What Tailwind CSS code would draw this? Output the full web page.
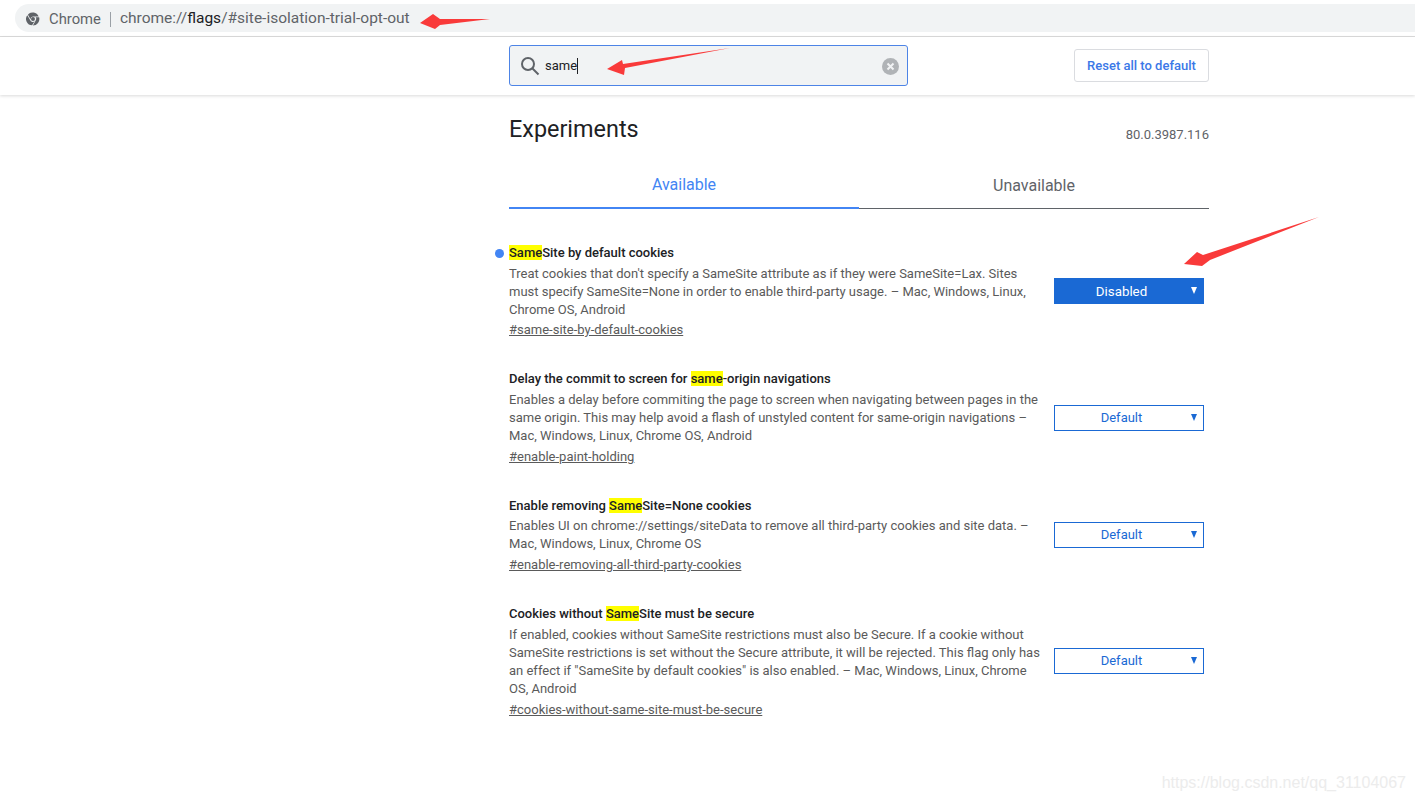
<!DOCTYPE html>
<html lang="en">
<head>
  <meta charset="UTF-8" />
  <title>Experiments</title>
  <script src="https://cdn.jsdelivr.net/npm/@tailwindcss/browser@4"></script>
</head>
<body class="relative h-[801px] overflow-hidden bg-white font-['Roboto',sans-serif] text-[#5a5a5a]">

  <!-- Address bar -->
  <div class="h-[37px] pt-1 pl-[15px] border-b border-[#dcdcdc]">
    <div class="flex items-center h-7 pt-0.5 pl-[11px] rounded-l-[14px] bg-[#f1f3f4] text-[15.5px]">
      <svg class="w-3.5 h-3.5 text-[#5f6368]" viewBox="0 0 24 24" fill="currentColor">
        <path d="M12 7.5h9.7A11 11 0 0 0 3.3 4.6l4.7 8.1A4.5 4.5 0 0 1 12 7.5z"/>
        <path d="M7 13.7 2.2 5.4A11 11 0 0 0 10.5 22.9l4.7-8.1A4.5 4.5 0 0 1 7 13.7z"/>
        <path d="M22.5 9h-6a4.5 4.5 0 0 1 .1 5.4L11.8 23A11 11 0 0 0 22.5 9z"/>
        <circle cx="12" cy="12" r="3.4"/>
      </svg>
      <span class="ml-[9px] text-[14.8px] text-[#5f6368]">Chrome</span>
      <span class="w-px h-[15px] mx-[9px] bg-[#9aa0a6]"></span>
      <span class="text-[#5f6368]">chrome://<span class="text-[#202124]">flags</span>/#site-isolation-trial-opt-out</span>
    </div>
  </div>

  <!-- Search header -->
  <header class="h-[58px] shadow-[0_1px_3px_rgba(0,0,0,0.15)]">
    <div class="flex items-start w-[700px] ml-[509px] pt-2">
      <div class="flex items-center w-[399px] h-[41px] pl-[10px] pr-2 rounded-[3px] border border-[#4d84e6] bg-[#f1f3f4]">
        <svg class="w-5 h-5 text-[#5f6368]" viewBox="0 0 20 20" fill="none" stroke="currentColor" stroke-width="2">
          <circle cx="8" cy="8" r="6"/>
          <path d="m12.5 12.5 6 6"/>
        </svg>
        <span class="ml-[5px] text-[13px] text-[#202124]">same</span>
        <span class="w-px h-4 bg-[#202124]"></span>
        <svg class="w-[17px] h-[17px] mt-px ml-auto" viewBox="0 0 17 17">
          <circle cx="8.5" cy="8.5" r="8.5" fill="#b0b3b6"/>
          <path d="m5.5 5.5 6 6m0-6-6 6" stroke="#f1f3f4" stroke-width="2"/>
        </svg>
      </div>
      <button class="flex items-center justify-center w-[135px] h-[33px] mt-1 ml-auto rounded-[3px] border border-[#dadce0] text-[13px] font-medium text-[#3b78e7]">Reset all to default</button>
    </div>
  </header>

  <main class="w-[700px] ml-[509px]">
    <div class="flex items-end justify-between h-[47px]">
      <h1 class="text-[23.4px] leading-[30px] -mb-0.5 text-[#202124]">Experiments</h1>
      <span class="text-[13px] leading-[18px] -mb-0.5 text-[#5f6368]">80.0.3987.116</span>
    </div>

    <div class="flex mt-[18px] h-[49px] text-[16px]">
      <div class="w-[350px] pt-[13px] text-center border-b-2 border-[#4285f4] text-[#4285f4]">Available</div>
      <div class="w-[350px] pt-[14px] text-center border-b border-[#5f6368] text-[#5f6368]">Unavailable</div>
    </div>

    <section class="flex flex-col gap-[31px] mt-[35px] text-[13px] leading-[18px]">
      <article class="relative flex items-center justify-between pr-[5px]">
        <span class="absolute -left-[14px] top-[5px] w-[9px] h-[9px] rounded-full bg-[#4285f4]"></span>
        <div class="w-[532px]">
          <h2 class="font-medium text-[#202124] mb-[3px]"><mark class="bg-[#ffff00] text-[#202124]">Same</mark>Site by default cookies</h2>
          <p>Treat cookies that don't specify a SameSite attribute as if they were SameSite=Lax. Sites must specify SameSite=None in order to enable third-party usage. – Mac, Windows, Linux, Chrome OS, Android</p>
          <a href="#same-site-by-default-cookies" class="block mt-0.5 underline">#same-site-by-default-cookies</a>
        </div>
        <div class="relative flex items-center justify-center w-[150px] h-[26px] mb-0.5 pt-0.5 pr-[15px] bg-[#1a69d4] text-[13.33px] text-white">Disabled
          <span class="absolute right-[7px] top-[9px] border-x-[3.5px] border-x-transparent border-t-[7px] border-t-white"></span>
        </div>
      </article>

      <article class="flex items-center justify-between pr-[5px]">
        <div class="w-[532px]">
          <h2 class="font-medium text-[#202124] mb-[3px]">Delay the commit to screen for <mark class="bg-[#ffff00] text-[#202124]">same</mark>-origin navigations</h2>
          <p>Enables a delay before commiting the page to screen when navigating between pages in the same origin. This may help avoid a flash of unstyled content for same-origin navigations – Mac, Windows, Linux, Chrome OS, Android</p>
          <a href="#enable-paint-holding" class="block mt-[3px] underline">#enable-paint-holding</a>
        </div>
        <div class="relative flex items-center justify-center w-[150px] h-[26px] mb-px pr-[15px] border border-[#1a69d4] text-[#1a69d4]">Default
          <span class="absolute right-[6px] top-[8px] border-x-[3.5px] border-x-transparent border-t-[7px] border-t-[#1a69d4]"></span>
        </div>
      </article>

      <article class="flex items-center justify-between pr-[5px]">
        <div class="w-[532px]">
          <h2 class="font-medium text-[#202124] mb-0.5">Enable removing <mark class="bg-[#ffff00] text-[#202124]">Same</mark>Site=None cookies</h2>
          <p>Enables UI on chrome://settings/siteData to remove all third-party cookies and site data. – Mac, Windows, Linux, Chrome OS</p>
          <a href="#enable-removing-all-third-party-cookies" class="block mt-[3px] underline">#enable-removing-all-third-party-cookies</a>
        </div>
        <div class="relative flex items-center justify-center w-[150px] h-[26px] mb-0.5 pr-[15px] border border-[#1a69d4] text-[#1a69d4]">Default
          <span class="absolute right-[6px] top-[8px] border-x-[3.5px] border-x-transparent border-t-[7px] border-t-[#1a69d4]"></span>
        </div>
      </article>

      <article class="flex items-center justify-between pr-[5px]">
        <div class="w-[532px]">
          <h2 class="font-medium text-[#202124] mb-[3px]">Cookies without <mark class="bg-[#ffff00] text-[#202124]">Same</mark>Site must be secure</h2>
          <p>If enabled, cookies without SameSite restrictions must also be Secure. If a cookie without SameSite restrictions is set without the Secure attribute, it will be rejected. This flag only has an effect if "SameSite by default cookies" is also enabled. – Mac, Windows, Linux, Chrome OS, Android</p>
          <a href="#cookies-without-same-site-must-be-secure" class="block mt-[3px] underline">#cookies-without-same-site-must-be-secure</a>
        </div>
        <div class="relative flex items-center justify-center w-[150px] h-[26px] mb-0.5 pr-[15px] border border-[#1a69d4] text-[#1a69d4]">Default
          <span class="absolute right-[6px] top-[8px] border-x-[3.5px] border-x-transparent border-t-[7px] border-t-[#1a69d4]"></span>
        </div>
      </article>
    </section>
  </main>

  <!-- Red annotation arrows drawn on top of the screenshot -->
  <svg class="absolute inset-0 pointer-events-none" width="1415" height="801" fill="#f93a3a">
    <path d="M420 23 433 14 440 19 490 19 440 25 435 29z"/>
    <path d="M607 69 622 60 623 64 730 48 625 68 624 75z"/>
    <path d="M1184 264 1197 252 1203 255 1319 217 1210 260 1202 266z"/>
  </svg>

  <!-- Blog watermark -->
  <span class="absolute right-[9px] bottom-[6px] font-['Liberation_Sans',sans-serif] text-[16px] text-[#ececec]">https://blog.csdn.net/qq_31104067</span>
</body>
</html>
